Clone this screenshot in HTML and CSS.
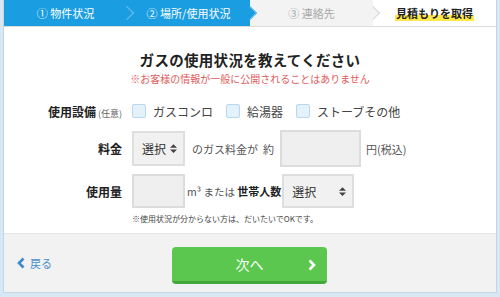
FILE: index.html
```html
<!DOCTYPE html>
<html lang="ja">
<head>
  <meta charset="UTF-8">
  <meta name="viewport" content="width=device-width, initial-scale=1.0">
  <title>見積もり - ガスの使用状況</title>
  <link rel="stylesheet" href="styles.css">
</head>
<body>
  <div class="page">
    <div class="card">
      <!-- ステップ -->
      <div class="steps">
        <div class="step done">① 物件状況</div>
        <div class="step done current">② 場所/使用状況</div>
        <div class="step todo">③ 連絡先</div>
        <div class="step last"><span class="mark">見積もりを取得</span></div>
      </div>

      <div class="main">
        <h1 class="title">ガスの使用状況を教えてください</h1>
        <p class="privacy">※お客様の情報が一般に公開されることはありません</p>

        <div class="form">
          <div class="label">使用設備<small>(任意)</small></div>
          <div class="field checks">
            <label class="check"><span class="box"></span>ガスコンロ</label>
            <label class="check"><span class="box"></span>給湯器</label>
            <label class="check"><span class="box"></span>ストーブその他</label>
          </div>

          <div class="label">料金</div>
          <div class="field">
            <div class="select small">選択
              <svg width="7" height="9" viewBox="0 0 8 10"><path d="M4 0 8 4H0zM4 10 0 6h8z" fill="#444"/></svg>
            </div>
            <span class="text">のガス料金が</span>
            <span class="text">約</span>
            <div class="input wide"></div>
            <span class="text">円(税込)</span>
          </div>

          <div class="label">使用量</div>
          <div class="field">
            <div class="input narrow"></div>
            <span class="text tight">m³ または <b>世帯人数</b></span>
            <div class="select large">選択
              <svg width="7" height="9" viewBox="0 0 8 10"><path d="M4 0 8 4H0zM4 10 0 6h8z" fill="#444"/></svg>
            </div>
          </div>

          <div></div>
          <p class="hint">※使用状況が分からない方は、だいたいでOKです。</p>
        </div>
      </div>

      <div class="footer">
        <a class="back" href="#">
          <svg width="8" height="12" viewBox="0 0 8 12"><path d="M6.5 1.5 2 6l4.5 4.5" fill="none" stroke="#3b8bcc" stroke-width="2.6"/></svg>
          戻る
        </a>
        <button class="next" type="button">次へ
          <svg class="arrow" width="8" height="12" viewBox="0 0 8 12"><path d="M1.5 1.5 6 6l-4.5 4.5" fill="none" stroke="#fff" stroke-width="2.6"/></svg>
        </button>
      </div>
    </div>
  </div>
</body>
</html>
```

FILE: styles.css
```css
* {
  box-sizing: border-box;
  margin: 0;
  padding: 0;
  font-family: "Noto Sans CJK JP", "Noto Sans", sans-serif;
}

body {
  background: #d6e8f5;
  width: 500px;
  height: 297px;
  overflow: hidden;
}

.page {
  padding: 0 3px 4px 3px;
}

.card {
  height: 293px;
  background: #fff;
  border: 1px solid #c9d6e0;
  border-top: none;
  display: flex;
  flex-direction: column;
}

/* ステップ */
.steps {
  display: flex;
  height: 27px;
  border-bottom: 1px solid #dcdcdc;
}

.step {
  flex: 1;
  position: relative;
  display: flex;
  align-items: center;
  justify-content: center;
  font-size: 11px;
  color: #fff;
  background: #1a9de1;
}

.step.done::after {
  content: "";
  position: absolute;
  right: -5px;
  top: 8px;
  width: 9px;
  height: 9px;
  background: #1a9de1;
  border-top: 1px solid #6cc1ee;
  border-right: 1px solid #6cc1ee;
  transform: rotate(45deg);
  z-index: 2;
}

.step.todo {
  background: #f3f3f3;
  color: #a8a8a8;
}

.step.todo::after {
  content: "";
  position: absolute;
  right: -5px;
  top: 8px;
  width: 9px;
  height: 9px;
  background: #f3f3f3;
  border-top: 1px solid #d8d8d8;
  border-right: 1px solid #d8d8d8;
  transform: rotate(45deg);
  z-index: 2;
}

.step.last {
  background: #fff;
  color: #222;
  font-weight: bold;
}

.mark {
  background: linear-gradient(transparent 62%, #ffe94a 62%);
  padding: 0 1px;
}

/* メイン */
.main {
  flex: 1;
  padding-top: 22px;
}

.title {
  text-align: center;
  font-size: 14.5px;
  line-height: 22px;
  font-weight: bold;
  color: #222;
  letter-spacing: 0.3px;
}

.privacy {
  text-align: center;
  font-size: 10px;
  line-height: 14px;
  color: #e05a5a;
  margin-top: 1px;
}

.form {
  display: grid;
  grid-template-columns: 118px 1fr;
  column-gap: 10px;
  row-gap: 7px;
  margin-top: 13px;
  align-items: center;
}

.label {
  text-align: right;
  font-size: 12px;
  font-weight: bold;
  color: #222;
  white-space: nowrap;
}

.label small {
  font-size: 9px;
  font-weight: normal;
  color: #666;
  margin-left: 2px;
}

.field {
  display: flex;
  align-items: center;
  gap: 5px;
}

.checks {
  height: 24px;
  gap: 13px;
}

.check {
  display: flex;
  align-items: center;
  gap: 7px;
  font-size: 12px;
  color: #444;
}

.box {
  width: 14px;
  height: 14px;
  background: #e3f1fb;
  border: 1px solid #b9d8ee;
  border-radius: 2px;
}

.text {
  font-size: 11px;
  color: #555;
  white-space: nowrap;
}

.text.tight {
  font-size: 10.5px;
  margin-right: -4px;
}

.text b {
  font-size: 11px;
  color: #222;
}

.select {
  height: 35px;
  background: #f1f1f1;
  border: 2px solid #dedede;
  display: flex;
  align-items: center;
  justify-content: space-between;
  padding: 0 6px 0 8px;
  font-size: 12px;
  color: #333;
}

.select.small {
  width: 53px;
  margin-right: 2px;
}

.select.large {
  width: 72px;
  height: 34px;
}

.input {
  height: 37px;
  background: #efefef;
  border: 2px solid #dcdcdc;
}

.input.wide {
  width: 81px;
  margin-left: 1px;
}

.input.narrow {
  width: 53px;
  height: 34px;
  margin-right: -3px;
}

.hint {
  font-size: 8px;
  line-height: 12px;
  color: #444;
  margin-top: -2px;
}

/* フッター */
.footer {
  height: 59px;
  background: #f2f2f2;
  border-top: 1px solid #e6e6e6;
  display: flex;
  align-items: center;
  padding: 0 0 0 13px;
}

.back {
  display: flex;
  align-items: center;
  gap: 5px;
  font-size: 11px;
  color: #4a8fcc;
  text-decoration: none;
  width: 155px;
}

.next {
  position: relative;
  width: 155px;
  height: 37px;
  margin-top: 4px;
  background: #5bc74e;
  border: none;
  border-bottom: 3px solid #43a83b;
  border-radius: 4px;
  color: #fff;
  font-size: 14px;
  display: flex;
  align-items: center;
  justify-content: center;
  cursor: pointer;
}

.next .arrow {
  position: absolute;
  right: 11px;
  top: 12px;
}
```
